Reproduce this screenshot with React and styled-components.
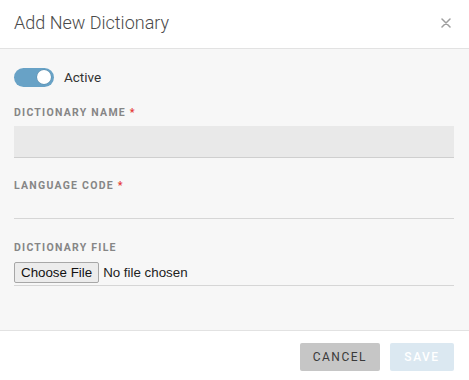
import React, { useState } from "react";
import styled, { createGlobalStyle } from "styled-components";

const GlobalStyle = createGlobalStyle`
  html, body {
    margin: 0;
    padding: 0;
    background: #ffffff;
    font-family: Roboto, "Liberation Sans", sans-serif;
  }
  * {
    box-sizing: border-box;
  }
`;

const App = () => {
  const [active, setActive] = useState(true);

  return (
    <>
      <GlobalStyle />
      <Dialog>
        <Header>
          <Title>Add New Dictionary</Title>
          <CloseButton aria-label="close">
            <svg width="10" height="10" viewBox="0 0 10 10">
              <path
                d="M1 1 L9 9 M9 1 L1 9"
                stroke="#9e9e9e"
                strokeWidth="1.5"
                strokeLinecap="round"
              />
            </svg>
          </CloseButton>
        </Header>

        <Body>
          <ToggleRow>
            <Switch $on={active} onClick={() => setActive(!active)}>
              <Knob $on={active} />
            </Switch>
            <ToggleLabel>Active</ToggleLabel>
          </ToggleRow>

          <Field $gap={20}>
            <Label>
              Dictionary Name <Required>*</Required>
            </Label>
            <TextInput $filled />
          </Field>

          <Field $gap={21}>
            <Label>
              Language Code <Required>*</Required>
            </Label>
            <TextInput $short />
          </Field>

          <Field $gap={22}>
            <Label>Dictionary File</Label>
            <FileWrap>
              <FileInput type="file" />
            </FileWrap>
          </Field>
        </Body>

        <Footer>
          <Button>Cancel</Button>
          <Button $primary disabled>
            Save
          </Button>
        </Footer>
      </Dialog>
    </>
  );
};

const Dialog = styled.div`
  width: 469px;
  height: 380px;
  display: flex;
  flex-direction: column;
  background: #ffffff;
`;

const Header = styled.div`
  height: 49px;
  padding: 0 14px 3px;
  display: flex;
  align-items: center;
  justify-content: space-between;
  border-bottom: 1px solid #e2e2e2;
`;

const Title = styled.h2`
  margin: 0;
  font-size: 18px;
  font-weight: 300;
  color: #4a4a4a;
`;

const CloseButton = styled.button`
  border: none;
  background: none;
  padding: 0;
  margin-right: 4px;
  display: flex;
  cursor: pointer;
`;

const Body = styled.div`
  height: 281px;
  padding: 19px 15px 0 14px;
  background: #f7f7f7;
`;

const ToggleRow = styled.div`
  display: flex;
  align-items: center;
  gap: 10px;
  height: 18px;
`;

const Switch = styled.div`
  width: 40px;
  height: 19px;
  border-radius: 10px;
  background: ${(p) => (p.$on ? "#68a2c6" : "#cccccc")};
  display: flex;
  align-items: center;
  justify-content: ${(p) => (p.$on ? "flex-end" : "flex-start")};
  padding: 0 3px;
  cursor: pointer;
`;

const Knob = styled.span`
  width: 14px;
  height: 14px;
  border-radius: 50%;
  background: #ffffff;
  box-shadow: 0 0 0 0.5px rgba(0, 0, 0, 0.15);
`;

const ToggleLabel = styled.span`
  font-size: 13.5px;
  color: #333333;
`;

const Field = styled.div`
  margin-top: ${(p) => p.$gap}px;
  display: flex;
  flex-direction: column;
`;

const Label = styled.label`
  font-size: 10.5px;
  line-height: 14px;
  font-weight: 700;
  letter-spacing: 1.25px;
  text-transform: uppercase;
  color: #868686;
`;

const Required = styled.span`
  color: #e53935;
`;

const TextInput = styled.input`
  margin-top: 6px;
  height: ${(p) => (p.$short ? 20 : 32)}px;
  border: none;
  border-bottom: 1px solid ${(p) => (p.$filled ? "#cfcfcf" : "#d6d6d6")};
  background: ${(p) => (p.$filled ? "#e9e9e9" : "transparent")};
  outline: none;
  padding: 0 8px;
  font-size: 13px;
`;

const FileWrap = styled.div`
  margin-top: 7px;
  padding-bottom: 2px;
  border-bottom: 1px solid #d6d6d6;
`;

const FileInput = styled.input`
  font-family: "Liberation Sans", Arial, sans-serif;
  font-size: 13.33px;
  color: #222222;

  &::file-selector-button {
    font-family: "Liberation Sans", Arial, sans-serif;
    font-size: 13.33px;
    height: 21px;
    padding: 0 6px;
    margin-right: 4px;
    border: 1px solid #a7a7a7;
    border-radius: 2px;
    background: #ececec;
    color: #111111;
  }
`;

const Footer = styled.div`
  flex: 1;
  border-top: 1px solid #e2e2e2;
  padding: 12px 15px 0 0;
  display: flex;
  justify-content: flex-end;
  gap: 10px;
`;

const Button = styled.button`
  height: 28px;
  min-width: 64px;
  padding: 0 13px;
  border: none;
  border-radius: 2px;
  font-family: Roboto, sans-serif;
  font-size: 12px;
  font-weight: ${(p) => (p.$primary ? 500 : 400)};
  letter-spacing: 1.5px;
  text-transform: uppercase;
  background: ${(p) => (p.$primary ? "#dbe8f1" : "#c6c6c6")};
  color: ${(p) => (p.$primary ? "#ffffff" : "#3a3a3a")};
`;

export default App;
